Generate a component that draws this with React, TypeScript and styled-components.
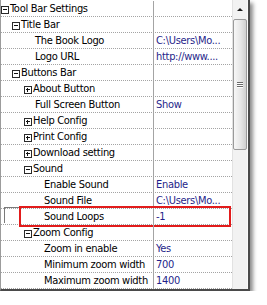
import styled, { createGlobalStyle } from 'styled-components';

type Kind = 'open' | 'closed' | 'leaf';

type Item = {
    label: string;
    value?: string;
    kind: Kind;
    indent: number;
    selected?: boolean;
};

const items: Item[] = [
    { label: 'Tool Bar Settings', kind: 'open', indent: 0 },
    { label: 'Title Bar', kind: 'open', indent: 11 },
    { label: 'The Book Logo', kind: 'leaf', indent: 34, value: 'C:\\Users\\Mo...' },
    { label: 'Logo URL', kind: 'leaf', indent: 34, value: 'http://www....' },
    { label: 'Buttons Bar', kind: 'open', indent: 11 },
    { label: 'About Button', kind: 'closed', indent: 23 },
    { label: 'Full Screen Button', kind: 'leaf', indent: 34, value: 'Show' },
    { label: 'Help Config', kind: 'closed', indent: 23 },
    { label: 'Print Config', kind: 'closed', indent: 23 },
    { label: 'Download setting', kind: 'closed', indent: 23 },
    { label: 'Sound', kind: 'open', indent: 23 },
    { label: 'Enable Sound', kind: 'leaf', indent: 43, value: 'Enable' },
    { label: 'Sound File', kind: 'leaf', indent: 43, value: 'C:\\Users\\Mo...' },
    { label: 'Sound Loops', kind: 'leaf', indent: 43, value: '-1', selected: true },
    { label: 'Zoom Config', kind: 'open', indent: 23 },
    { label: 'Zoom in enable', kind: 'leaf', indent: 43, value: 'Yes' },
    { label: 'Minimum zoom width', kind: 'leaf', indent: 43, value: '700' },
    { label: 'Maximum zoom width', kind: 'leaf', indent: 43, value: '1400' },
];

const GlobalStyle = createGlobalStyle`
  body {
    margin: 0;
    background: #ffffff;
    font-family: "DejaVu Sans Condensed", "DejaVu Sans", sans-serif;
    font-stretch: condensed;
    font-size: 11px;
    letter-spacing: -0.3px;
  }
`;

const Frame = styled.div`
  display: flex;
  width: max-content;
  border-left: 1px solid #9c9c9c;
  border-right: 2px solid #4a4a4a;
  border-bottom: 2px solid #4a4a4a;
  box-shadow: 3px 3px 4px rgba(0, 0, 0, 0.45);
`;

const Grid = styled.div`
  width: 231px;
  padding-top: 1px;
  background: #ffffff;
`;

const Row = styled.div<{ $selected?: boolean }>`
  position: relative;
  display: flex;
  height: 16px;
  box-sizing: border-box;
  border-bottom: 1px dotted #a4a4a4;

  ${p =>
      p.$selected &&
      `
    &::before {
      content: '';
      position: absolute;
      left: 3px;
      top: -2px;
      width: 16px;
      height: 15px;
      border-top: 1px solid #7a7a7a;
      border-left: 1px solid #7a7a7a;
    }
  `}
`;

const Highlight = styled.div`
  position: absolute;
  left: 18px;
  right: 1px;
  top: -3px;
  bottom: -3px;
  border: 2px solid #e21b1b;
  pointer-events: none;
`;

const LabelCell = styled.div<{ $indent: number }>`
  display: flex;
  align-items: flex-start;
  width: 153px;
  padding-left: ${p => p.$indent}px;
  box-sizing: border-box;
  border-right: 1px solid #a4a4a4;
  overflow: hidden;
  white-space: nowrap;
  color: #000000;
  line-height: 14px;
  padding-top: 1px;
`;

const ValueCell = styled.div`
  flex: 1;
  padding-left: 2px;
  padding-top: 1px;
  line-height: 14px;
  white-space: nowrap;
  overflow: hidden;
  color: #1f1f8a;
`;

const ToggleBox = styled.span`
  position: relative;
  flex: none;
  width: 8px;
  height: 8px;
  margin-top: 4px;
  margin-right: 1px;
  box-sizing: border-box;
  border: 1px solid #2a2a2a;
  background: #ffffff;

  &::before {
    content: '';
    position: absolute;
    left: 1px;
    top: 2px;
    width: 4px;
    height: 1px;
    background: #111111;
  }
`;

const PlusBox = styled(ToggleBox)`
  &::after {
    content: '';
    position: absolute;
    left: 2px;
    top: 1px;
    width: 1px;
    height: 4px;
    background: #111111;
  }
`;

const ScrollBar = styled.div`
  display: flex;
  flex-direction: column;
  width: 16px;
  box-sizing: border-box;
  background: #f2f2f2;
  border-left: 1px solid #e2e2e2;
  border-right: 1px solid #fafafa;
`;

const ArrowButton = styled.div`
  display: flex;
  align-items: center;
  justify-content: center;
  height: 18px;
`;

const UpArrow = styled.span`
  width: 0;
  height: 0;
  border-left: 3px solid transparent;
  border-right: 3px solid transparent;
  border-bottom: 3px solid #1a1a1a;
`;

const Thumb = styled.div`
  display: flex;
  flex-direction: column;
  align-items: center;
  justify-content: center;
  gap: 1px;
  height: 131px;
  margin: 1px 0 0 0;
  box-sizing: border-box;
  border: 1px solid #9a9a9a;
  border-radius: 2px;
  background: linear-gradient(to right, #f7f7f7 0%, #e6e6e6 55%, #cfcfcf 100%);
`;

const Grip = styled.span`
  width: 6px;
  height: 1px;
  background: #6a6a6a;
  box-shadow: 0 1px 0 #ffffff;
`;

function Toggle({ kind }: { kind: Kind }) {
    if (kind === 'open') return <ToggleBox />;
    if (kind === 'closed') return <PlusBox />;
    return null;
}

export default function App() {
    return (
        <>
            <GlobalStyle />
            <Frame>
                <Grid>
                    {items.map(item => (
                        <Row key={item.label} $selected={item.selected}>
                            <LabelCell $indent={item.indent}>
                                <Toggle kind={item.kind} />
                                {item.label}
                            </LabelCell>
                            <ValueCell>{item.value}</ValueCell>
                            {item.selected && <Highlight />}
                        </Row>
                    ))}
                </Grid>
                <ScrollBar>
                    <ArrowButton>
                        <UpArrow />
                    </ArrowButton>
                    <Thumb>
                        <Grip />
                        <Grip />
                        <Grip />
                    </Thumb>
                </ScrollBar>
            </Frame>
        </>
    );
}
